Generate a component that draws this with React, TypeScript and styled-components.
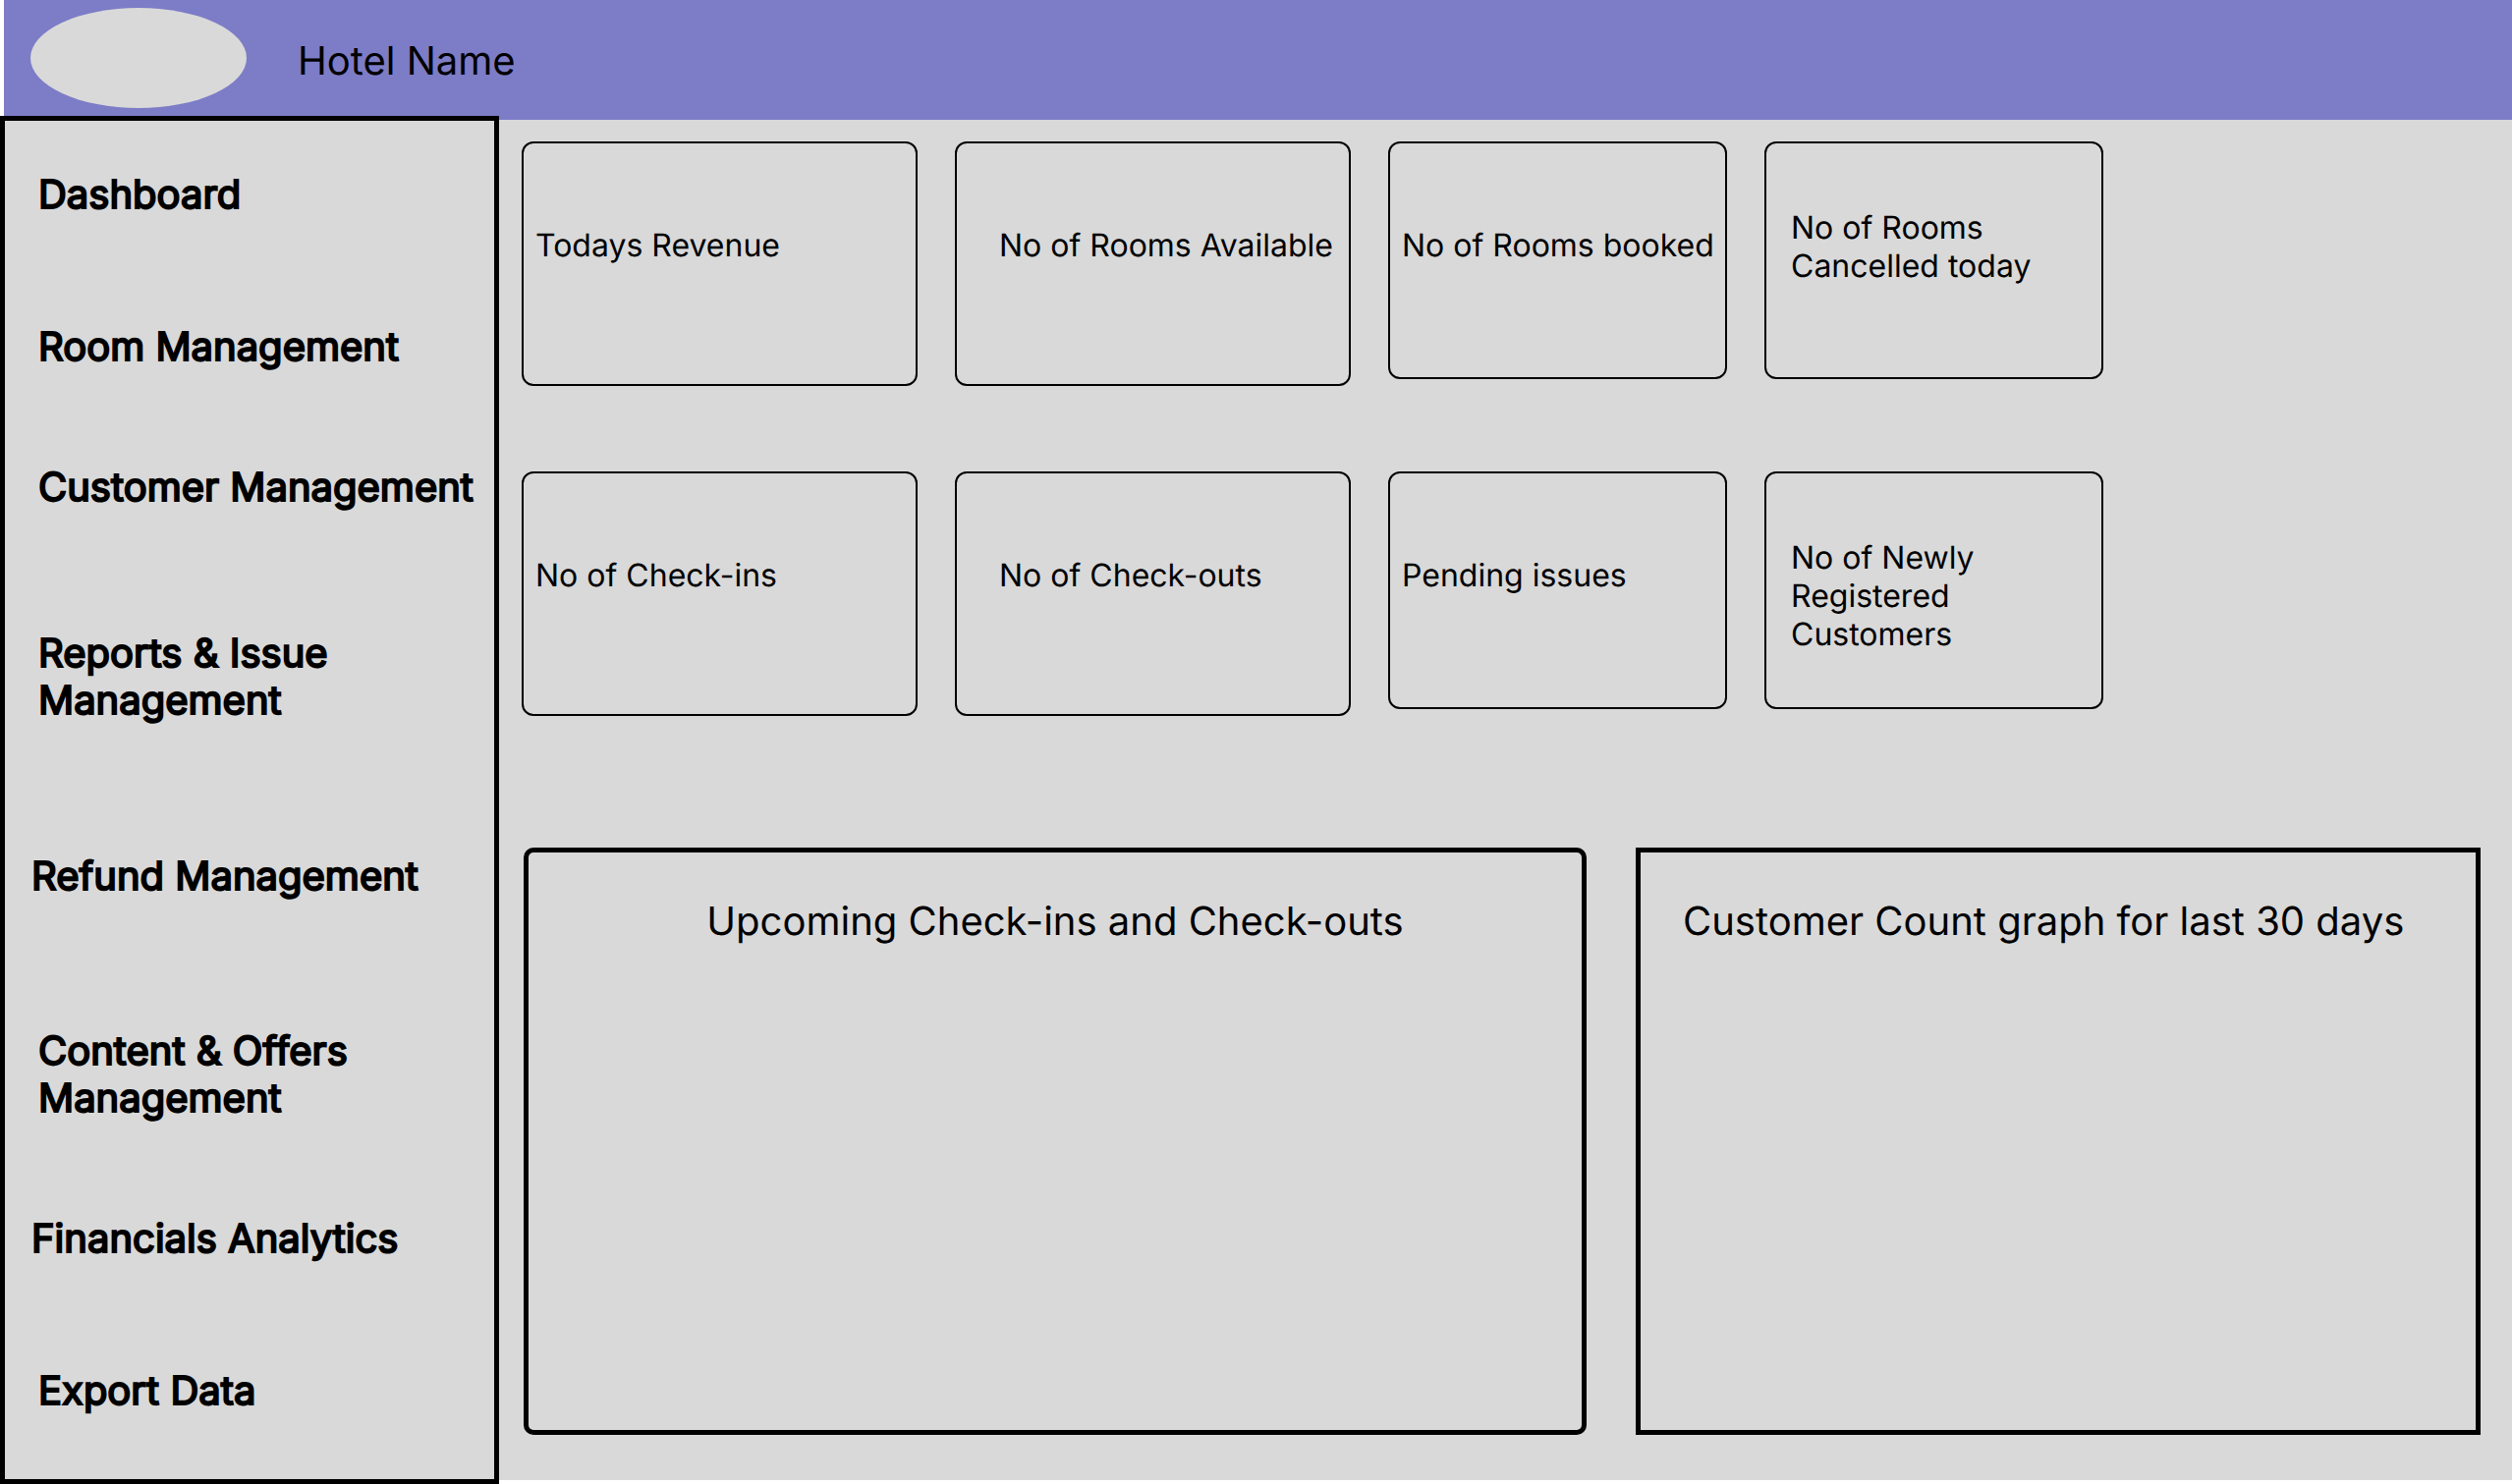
import React from "react";
import styled, { createGlobalStyle } from "styled-components";

const surface = "#d9d9d9";
const ink = "#000000";
const brand = "#7d7cc7";

const GlobalStyle = createGlobalStyle`
  *, *::before, *::after { box-sizing: border-box; }
  body {
    margin: 0;
    background: #ffffff;
    color: ${ink};
    font-family: Inter, "Liberation Sans", sans-serif;
    text-rendering: geometricPrecision;
  }
`;

const Page = styled.div`
  display: flex;
  flex-direction: column;
  min-height: 100vh;
`;

const Header = styled.header`
  display: flex;
  align-items: flex-start;
  gap: 52px;
  height: 122px;
  margin-left: 4px;
  padding: 8px 27px;
  background: ${brand};
`;

const Logo = styled.div`
  width: 220px;
  height: 102px;
  border-radius: 50%;
  background: ${surface};
`;

const HotelName = styled.h1`
  margin: 0;
  padding-top: 30px;
  font-size: 40px;
  line-height: 48px;
  font-weight: 400;
`;

const Body = styled.div`
  display: flex;
  flex: 1;
`;

const Sidebar = styled.nav`
  flex: 0 0 508px;
  margin-top: -4px;
  padding: 51px 0 66px;
  border: 5px solid ${ink};
  background: ${surface};
`;

const NavList = styled.ul`
  display: flex;
  flex-direction: column;
  margin: 0;
  padding: 0;
  list-style: none;
`;

const NavItem = styled.li<{ $space: number; $indent: number }>`
  margin-top: ${(p) => p.$space}px;
  padding-left: ${(p) => p.$indent}px;
`;

const NavLink = styled.a`
  display: block;
  max-width: 448px;
  color: ${ink};
  font-size: 40px;
  line-height: 48px;
  text-decoration: none;
  white-space: pre-line;
  -webkit-text-stroke: 2px ${ink};
`;

const Main = styled.main`
  display: flex;
  flex: 1;
  flex-direction: column;
  min-width: 0;
  margin-bottom: 4px;
  padding: 22px 32px 46px 23px;
  background: ${surface};
`;

const Stats = styled.section`
  display: grid;
  grid-template-columns:
    minmax(0, 403fr) minmax(0, 403fr) minmax(0, 345fr) minmax(0, 345fr)
    minmax(0, 346fr);
  column-gap: 38px;
  row-gap: 87px;
  align-items: start;
`;

const StatCard = styled.article<{
  $short?: boolean;
  $top: number;
  $inset: number;
  $newRow?: boolean;
}>`
  min-height: ${(p) => (p.$short ? 242 : 249)}px;
  padding: ${(p) => p.$top}px 8px 0 ${(p) => p.$inset}px;
  border: 2px solid ${ink};
  border-radius: 12px;
  ${(p) => p.$newRow && "grid-column-start: 1;"}
`;

const StatLabel = styled.h2`
  margin: 0;
  font-size: 32px;
  line-height: 39px;
  font-weight: 400;
`;

const Panels = styled.section`
  display: grid;
  flex: 1;
  grid-template-columns: minmax(0, 1082fr) minmax(0, 860fr);
  column-gap: 50px;
  margin-top: 134px;
  padding-left: 2px;
`;

const Panel = styled.article<{ $rounded?: boolean }>`
  padding: 46px 43px;
  border: 5px solid ${ink};
  border-radius: ${(p) => (p.$rounded ? 10 : 0)}px;
  text-align: ${(p) => (p.$rounded ? "center" : "left")};
`;

const PanelTitle = styled.h2`
  margin: 0;
  font-size: 40px;
  line-height: 48px;
  font-weight: 400;
`;

const navItems = [
  { label: "Dashboard", space: 0, indent: 34 },
  { label: "Room Management", space: 107, indent: 34 },
  { label: "Customer Management", space: 95, indent: 34 },
  { label: "Reports & Issue\nManagement", space: 121, indent: 34 },
  { label: "Refund Management", space: 131, indent: 27 },
  { label: "Content & Offers\nManagement", space: 130, indent: 34 },
  { label: "Financials Analytics", space: 95, indent: 27 },
  { label: "Export Data", space: 107, indent: 34 },
];

const stats = [
  { label: "Todays Revenue", top: 84, inset: 12, newRow: true },
  { label: "No of Rooms Available", top: 84, inset: 43 },
  { label: "No of Rooms booked", top: 84, inset: 12, short: true },
  { label: "No of Rooms Cancelled today", top: 66, inset: 25, short: true },
  { label: "No of Check-ins", top: 84, inset: 12, newRow: true },
  { label: "No of Check-outs", top: 84, inset: 43 },
  { label: "Pending issues", top: 84, inset: 12, short: true },
  { label: "No of Newly Registered Customers", top: 66, inset: 25, short: true },
];

export default function App() {
  return (
    <Page>
      <GlobalStyle />
      <Header>
        <Logo />
        <HotelName>Hotel Name</HotelName>
      </Header>
      <Body>
        <Sidebar>
          <NavList>
            {navItems.map((item) => (
              <NavItem key={item.label} $space={item.space} $indent={item.indent}>
                <NavLink href="#">{item.label}</NavLink>
              </NavItem>
            ))}
          </NavList>
        </Sidebar>
        <Main>
          <Stats>
            {stats.map((stat) => (
              <StatCard
                key={stat.label}
                $top={stat.top}
                $inset={stat.inset}
                $short={stat.short}
                $newRow={stat.newRow}
              >
                <StatLabel>{stat.label}</StatLabel>
              </StatCard>
            ))}
          </Stats>
          <Panels>
            <Panel $rounded>
              <PanelTitle>Upcoming Check-ins and Check-outs</PanelTitle>
            </Panel>
            <Panel>
              <PanelTitle>Customer Count graph for last 30 days</PanelTitle>
            </Panel>
          </Panels>
        </Main>
      </Body>
    </Page>
  );
}
